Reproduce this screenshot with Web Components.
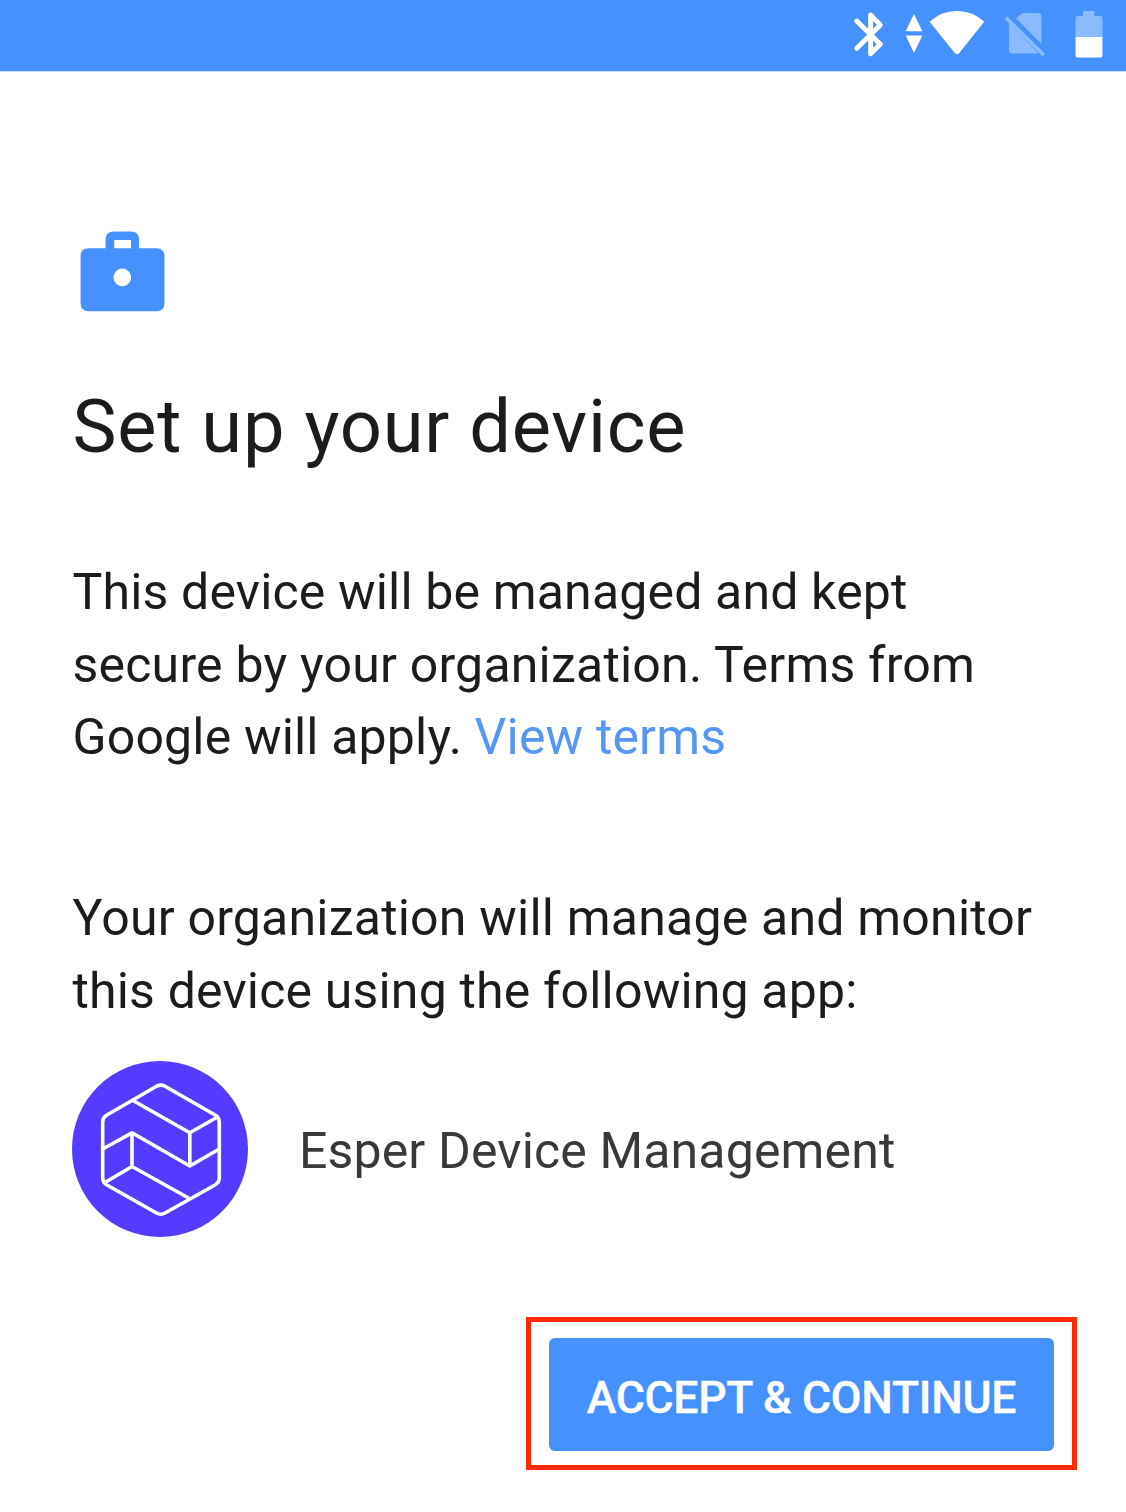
<!DOCTYPE html>
<html lang="en">
<head>
<meta charset="utf-8">
<title>Set up your device</title>
<style>
html,body{margin:0;height:100%;background:#fff}
body{font-family:Roboto,sans-serif;color:#1c1c1c;overflow:hidden}
</style>
</head>
<body>
<setup-screen>
  <status-bar slot="status"></status-bar>
  <work-icon slot="icon"></work-icon>
  <setup-title slot="title">Set up your device</setup-title>
  <setup-text style="margin-top:84px">
    <text-line style="letter-spacing:.16px">This device will be managed and kept</text-line>
    <text-line style="letter-spacing:.21px">secure by your organization. Terms from</text-line>
    <text-line style="letter-spacing:.17px">Google will apply. <terms-link>View terms</terms-link></text-line>
  </setup-text>
  <setup-text style="margin-top:108.6px">
    <text-line style="letter-spacing:.21px">Your organization will manage and monitor</text-line>
    <text-line style="letter-spacing:.18px">this device using the following app:</text-line>
  </setup-text>
  <managed-app>Esper Device Management</managed-app>
  <highlight-frame slot="action"><accept-button>ACCEPT &amp; CONTINUE</accept-button></highlight-frame>
</setup-screen>
<script>
const define = (name, markup) => customElements.define(name, class extends HTMLElement {
  constructor() {
    super();
    this.attachShadow({ mode: 'open' }).innerHTML = markup;
  }
});

define('setup-screen', `
<style>
:host{display:flex;flex-direction:column;height:1512px;width:1126px}
main{flex:1;display:flex;flex-direction:column;padding:160px 72px 0 72.5px}
footer{display:flex;justify-content:flex-end;padding:0 49px 42px 0}
</style>
<slot name="status"></slot>
<main><slot name="icon"></slot><slot name="title"></slot><slot></slot></main>
<footer><slot name="action"></slot></footer>`);

define('status-bar', `
<style>
:host{display:flex;justify-content:flex-end;height:71px;background:#4491ff;box-shadow:0 1px 0 #c4dcff}
svg{display:block}
</style>
<svg width="290" height="71" viewBox="0 0 290 71" fill="#fff">
  <path d="M20.8 21 44.3 44.2 34.6 53.7V15L44.3 24.9 20.8 48.2" fill="none" stroke="#fff" stroke-width="4.9" stroke-linejoin="round" stroke-linecap="round"/>
  <path d="M78 14 86.3 31.3H69.7ZM69.7 35.4H86.3L78 53Z"/>
  <path d="M93.6 21.8C102 14.3 111 11 121 11s19 3.3 27.3 10.8L123 53.2q-2 2-4 0Z"/>
  <g fill="#8abaff">
    <path d="M186.5 13H202q3.5 0 3.5 3.5V44L179.8 18.4ZM173 23 202.5 53.6H176.5q-3.5 0-3.5-3.5Z"/>
    <path d="M169.8 17.7 207.7 55" fill="none" stroke="#8abaff" stroke-width="3.8"/>
    <path d="M247 11H258.5V16H264.5q2 0 2 2V37.5H239.5V18q0-2 2-2H247Z"/>
  </g>
  <path d="M239.5 37H266.5V55.5q0 2-2 2H241.5q-2 0-2-2Z"/>
</svg>`);

define('work-icon', `
<style>:host{display:block;height:81px;padding-left:7.5px}svg{display:block}</style>
<svg width="85" height="81" viewBox="0 0 85 81" fill="#4491ff">
  <path fill-rule="evenodd" d="M8.7 17.3H25.6V8.5Q25.6.4 33.7.4H51Q59 .4 59 8.5V17.3H76.3Q84.5 17.3 84.5 25.3V72Q84.5 80.2 76.3 80.2H8.7Q.6 80.2 .6 72V25.3Q.6 17.3 8.7 17.3ZM34.2 9V17.3H51V9ZM42.3 37.6a8.8 8.8 0 1 0 .01 0Z"/>
</svg>`);

define('setup-title', `
<style>
:host{display:block;margin-top:70px}
h1{margin:0;font:400 74px/90px Roboto,sans-serif;letter-spacing:.78px;white-space:nowrap}
</style><h1><slot></slot></h1>`);

define('setup-text', `
<style>:host{display:flex;flex-direction:column;font-size:50px;line-height:72.6px}</style>
<slot></slot>`);

define('text-line', `<style>:host{display:block;white-space:nowrap}</style><slot></slot>`);

define('terms-link', `<style>:host{color:#5697f6}</style><slot></slot>`);

define('managed-app', `
<style>
:host{display:flex;align-items:center;gap:51px;margin:33px 0 0 -.5px;font-size:50px;line-height:60px;letter-spacing:.14px;color:#393939;white-space:nowrap}
svg{display:block;flex:none}
span{padding-top:4px}
</style>
<svg width="176" height="176" viewBox="0 0 176 176">
  <circle cx="88" cy="88" r="88" fill="#543bff"/>
  <g fill="none" stroke="#fff" stroke-width="3.6" stroke-linejoin="round">
    <path d="M84.5 25.2Q88.8 23 93 25.2L143.5 54.3Q147.3 56.7 147.3 61V117Q147.3 121.3 143.5 123.7L93 152Q88.8 154.4 84.5 152L34.5 123.7Q30.7 121.3 30.7 117V61Q30.7 56.7 34.5 54.3Z"/>
    <path d="M60.5 39.2 117.8 71.8 146 55.8M117.8 71.8V105M30.7 88 60 71.8 117.8 105 147.3 88M60 71.8V105.5M32.5 121.7 60 105.5 117 137.3"/>
  </g>
</svg>
<span><slot></slot></span>`);

define('highlight-frame', `<style>:host{display:block;border:5px solid #ff2a00;padding:16px 18px 14px}</style><slot></slot>`);

define('accept-button', `
<style>
:host{display:block}
button{display:block;box-sizing:border-box;width:505px;height:113px;margin:0;padding:6px 0 0;border:0;border-radius:6px;background:#4491ff;color:#fff;font:500 44.5px/54px Roboto,sans-serif;letter-spacing:-.25px;white-space:nowrap;text-align:center;-webkit-text-stroke:.4px #fff}
</style><button type="button"><slot></slot></button>`);
</script>
</body>
</html>
